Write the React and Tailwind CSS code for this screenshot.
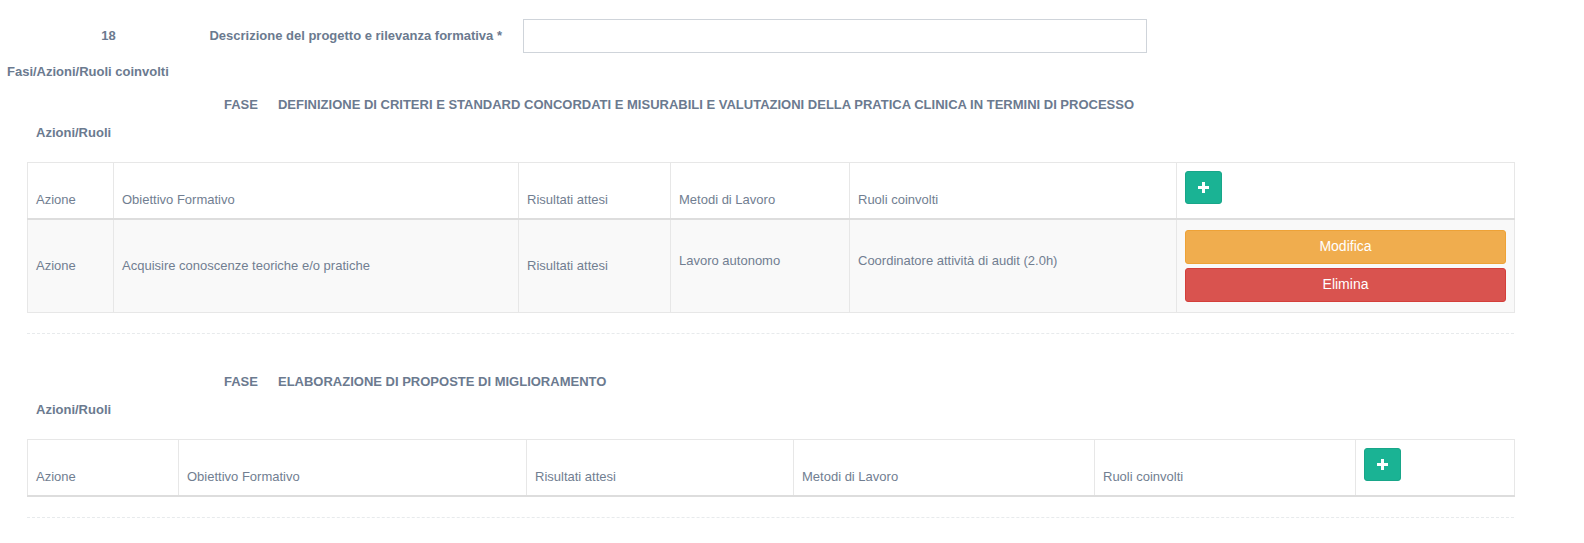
import React from "react";

const font = { fontFamily: '"Liberation Sans", Arial, sans-serif' };

function PlusButton() {
  return (
    <button className="w-[37px] h-[33px] rounded-[3px] bg-[#1ab394] border border-[#18a689] flex items-center justify-center">
      <svg width="11" height="11" viewBox="0 0 11 11">
        <rect x="4" y="0" width="3" height="11" fill="#fff" />
        <rect x="0" y="4" width="11" height="3" fill="#fff" />
      </svg>
    </button>
  );
}

function HeaderRow({ widths, labels }) {
  return (
    <thead>
      <tr className="h-[56px]">
        {labels.map((l, i) => (
          <th
            key={i}
            style={{ width: widths[i] }}
            className="border border-[#e7e7e7] border-b-2 border-b-[#dddddd] align-bottom text-left font-normal px-2 pb-2 pt-2 leading-[20px]"
          >
            {l}
          </th>
        ))}
        <th
          style={{ width: widths[labels.length] }}
          className="border border-[#e7e7e7] border-b-2 border-b-[#dddddd] align-top text-left px-2 pt-2 pb-[13px]"
        >
          <PlusButton />
        </th>
      </tr>
    </thead>
  );
}

const labels = ["Azione", "Obiettivo Formativo", "Risultati attesi", "Metodi di Lavoro", "Ruoli coinvolti"];

function Phase({ title, widths, withRow }) {
  return (
    <div>
      <div className="flex text-[13px] font-bold leading-[20px] text-[#6b7a8f] pl-[224px]">
        <span>FASE</span>
        <span className="ml-[20px]">{title}</span>
      </div>
      <div className="mt-[8px] text-[13px] font-bold leading-[20px] text-[#6b7a8f] pl-[36px]">Azioni/Ruoli</div>
      <div className="mt-[19px] ml-[27px] w-[1487px]">
        <table className="w-full table-fixed border-collapse text-[13px] text-[#717e91]">
          <HeaderRow widths={widths} labels={labels} />
          {withRow && (
            <tbody>
              <tr className="bg-[#f9f9f9] h-[94px]">
                <td className="border border-[#e7e7e7] px-2 align-middle">Azione</td>
                <td className="border border-[#e7e7e7] px-2 align-middle">Acquisire conoscenze teoriche e/o pratiche</td>
                <td className="border border-[#e7e7e7] px-2 align-middle">Risultati attesi</td>
                <td className="border border-[#e7e7e7] px-2 align-middle pb-[10px]">Lavoro autonomo</td>
                <td className="border border-[#e7e7e7] px-2 align-middle pb-[10px]">Coordinatore attività di audit (2.0h)</td>
                <td className="border border-[#e7e7e7] px-2 pt-[10px] pb-[10px] align-top">
                  <div className="flex flex-col gap-[4px]">
                    <button className="h-[34px] w-full rounded-[3px] bg-[#f0ad4e] border border-[#eea236] text-white text-[14px]">Modifica</button>
                    <button className="h-[34px] w-full rounded-[3px] bg-[#d9534f] border border-[#d43f3a] text-white text-[14px]">Elimina</button>
                  </div>
                </td>
              </tr>
            </tbody>
          )}
        </table>
      </div>
      <div className="mt-[20px] ml-[27px] w-[1487px] border-t border-dashed border-[#e7eaec]" />
    </div>
  );
}

export default function App() {
  return (
    <div style={font} className="w-[1584px] h-[543px] bg-white overflow-hidden pt-[19px]">
      <div className="flex items-center h-[34px]">
        <div className="w-[217px] text-center text-[13px] font-bold text-[#6b7a8f]">18</div>
        <div className="w-[285px] flex justify-end whitespace-nowrap text-[13px] font-bold text-[#6b7a8f]">Descrizione del progetto e rilevanza formativa *</div>
        <input className="ml-[21px] w-[624px] h-[34px] border border-[#cfd4da] bg-white outline-none" />
      </div>
      <div className="mt-[9px] pl-[7px] text-[13px] font-bold leading-[20px] text-[#6b7a8f]">Fasi/Azioni/Ruoli coinvolti</div>
      <div className="mt-[13px]">
        <Phase
          title="DEFINIZIONE DI CRITERI E STANDARD CONCORDATI E MISURABILI E VALUTAZIONI DELLA PRATICA CLINICA IN TERMINI DI PROCESSO"
          widths={[86, 405, 152, 179, 327, 338]}
          withRow
        />
      </div>
      <div className="mt-[38px]">
        <Phase
          title="ELABORAZIONE DI PROPOSTE DI MIGLIORAMENTO"
          widths={[151, 348, 267, 301, 261, 159]}
        />
      </div>
    </div>
  );
}
